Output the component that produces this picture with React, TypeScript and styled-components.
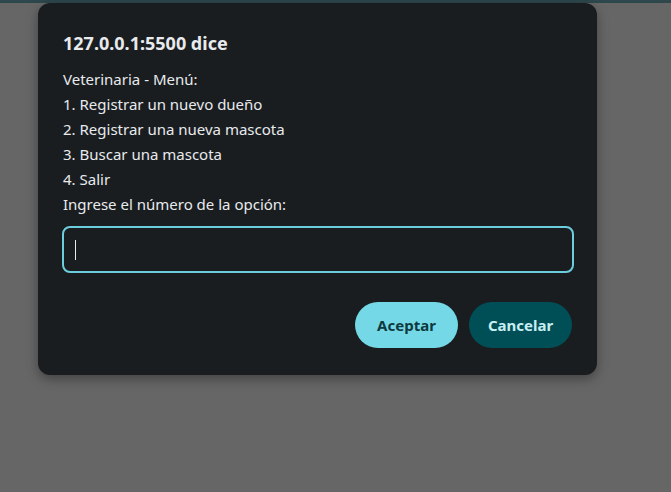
import React from "react";
import styled, { createGlobalStyle } from "styled-components";

const Global = createGlobalStyle`
  html, body { margin: 0; padding: 0; }
  body { background: #666666; font-family: "Segoe UI", "Noto Sans", sans-serif; }
`;

const Page = styled.div`
  width: 671px;
  height: 492px;
  background: #666666;
  overflow: hidden;
`;

const TopStrip = styled.div`
  height: 3px;
  background: #2d474c;
`;

const Dialog = styled.div`
  margin-left: 38px;
  width: 559px;
  height: 372px;
  box-sizing: border-box;
  background: #191d20;
  border-radius: 12px;
  box-shadow: 0 4px 12px rgba(0, 0, 0, 0.35);
  padding: 28px 23px 0 24px;
  display: flex;
  flex-direction: column;
`;

const Title = styled.div`
  color: #e8eaed;
  font-size: 18px;
  font-weight: 700;
  line-height: 24px;
  padding-left: 1px;
`;

const Message = styled.div`
  margin-top: 12px;
  color: #e8eaed;
  font-size: 15px;
  line-height: 25px;
  padding-left: 1px;
`;

const Input = styled.div`
  margin-top: 9px;
  height: 47px;
  box-sizing: border-box;
  border: 2px solid #6ccedd;
  border-radius: 8px;
  display: flex;
  align-items: center;
  padding-left: 11px;
`;

const Caret = styled.div`
  width: 1px;
  height: 20px;
  background: #e8eaed;
`;

const Buttons = styled.div`
  margin-top: 29px;
  display: flex;
  justify-content: flex-end;
  gap: 11px;
  padding-right: 2px;
`;

const Button = styled.div<{ $primary?: boolean }>`
  width: 103px;
  height: 46px;
  border-radius: 23px;
  display: flex;
  align-items: center;
  justify-content: center;
  font-size: 15px;
  font-weight: 700;
  background: ${(p) => (p.$primary ? "#75d8e7" : "#004f57")};
  color: ${(p) => (p.$primary ? "#0d3a40" : "#c8eef3")};
`;

const lines = [
  "Veterinaria - Menú:",
  "1. Registrar un nuevo dueño",
  "2. Registrar una nueva mascota",
  "3. Buscar una mascota",
  "4. Salir",
  "Ingrese el número de la opción:",
];

export default function App() {
  return (
    <Page>
      <Global />
      <TopStrip />
      <Dialog>
        <Title>127.0.0.1:5500 dice</Title>
        <Message>
          {lines.map((l) => (
            <div key={l}>{l}</div>
          ))}
        </Message>
        <Input>
          <Caret />
        </Input>
        <Buttons>
          <Button $primary>Aceptar</Button>
          <Button>Cancelar</Button>
        </Buttons>
      </Dialog>
    </Page>
  );
}
